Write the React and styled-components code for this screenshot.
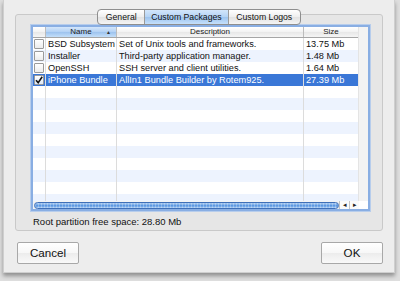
import React from "react";
import styled, { createGlobalStyle } from "styled-components";

const GlobalStyle = createGlobalStyle`
  html, body {
    margin: 0;
    padding: 0;
    background: #d9d9d9;
  }
  body {
    font-family: "Liberation Sans", Arial, sans-serif;
    color: #000;
  }
`;

const packages = [
  { name: "BSD Subsystem", desc: "Set of Unix tools and frameworks.", size: "13.75 Mb" },
  { name: "Installer", desc: "Third-party application manager.", size: "1.48 Mb" },
  { name: "OpenSSH", desc: "SSH server and client utilities.", size: "1.64 Mb" },
  { name: "iPhone Bundle", desc: "AllIn1 Bundle Builder by Rotem925.", size: "27.39 Mb", checked: true, selected: true },
];

const EMPTY_ROWS = 10;

function App() {
  const rows = [...packages];
  for (let i = 0; i < EMPTY_ROWS; i++) rows.push(null);

  return (
    <>
      <GlobalStyle />
      <Page>
        <Sheet>
          <GroupBox>
            <Tabs>
              <Tab>General</Tab>
              <Tab $active>Custom Packages</Tab>
              <Tab $last>Custom Logos</Tab>
            </Tabs>
            <TableFrame>
              <TableBody>
                <Grid>
                  <HeaderRow>
                    <HeadCell />
                    <HeadCell $sorted>
                      Name
                      <SortArrow>▲</SortArrow>
                    </HeadCell>
                    <HeadCell>Description</HeadCell>
                    <HeadCell $last>Size</HeadCell>
                  </HeaderRow>
                  {rows.map((row, i) => (
                    <Row key={i} $odd={i % 2 === 1} $selected={row && row.selected}>
                      <CheckCell>
                        {row && (
                          <Checkbox $checked={row.checked}>
                            {row.checked && (
                              <svg width="8" height="8" viewBox="0 0 8 8">
                                <path d="M1 4.2 L3.2 6.6 L7.2 0.8" fill="none" stroke="#111" strokeWidth="1.6" />
                              </svg>
                            )}
                          </Checkbox>
                        )}
                      </CheckCell>
                      <Cell>{row && row.name}</Cell>
                      <Cell>{row && row.desc}</Cell>
                      <Cell $last>{row && row.size}</Cell>
                    </Row>
                  ))}
                </Grid>
                <VScroll />
              </TableBody>
              <HScrollBar>
                <Thumb />
                <ArrowBtn>◂</ArrowBtn>
                <ArrowBtn>▸</ArrowBtn>
                <Corner />
              </HScrollBar>
            </TableFrame>
            <FreeSpace>Root partition free space: 28.80 Mb</FreeSpace>
          </GroupBox>
          <Buttons>
            <Button>Cancel</Button>
            <Button>OK</Button>
          </Buttons>
        </Sheet>
      </Page>
    </>
  );
}

export default App;

const Page = styled.div`
  width: 400px;
  height: 281px;
  overflow: hidden;
  background: #dedede;
`;

const Sheet = styled.div`
  width: 392px;
  height: 273px;
  margin-left: 3px;
  box-sizing: border-box;
  background: #ededed;
  border: 1px solid #cfcfcf;
  border-top: none;
  box-shadow: 0 3px 4px rgba(0, 0, 0, 0.35);
  padding: 14px 11px 0 11px;
  display: flex;
  flex-direction: column;
`;

const GroupBox = styled.div`
  position: relative;
  height: 217px;
  box-sizing: border-box;
  border: 1px solid #c9c9c9;
  border-radius: 3px;
  background: #e6e6e6;
  padding: 10px 12px 0 15px;
  display: flex;
  flex-direction: column;
`;

const Tabs = styled.div`
  position: absolute;
  top: -6px;
  left: 0;
  right: 0;
  margin: 0 auto;
  width: max-content;
  display: flex;
  height: 14px;
  border: 1px solid #8e8e8e;
  border-radius: 4px;
  overflow: hidden;
  background: linear-gradient(#ffffff, #eeeeee 50%, #e2e2e2 51%, #f4f4f4);
`;

const Tab = styled.div`
  font-size: 8.7px;
  line-height: 14px;
  padding: 0 ${(p) => (p.$active ? "6px" : "7.5px")};
  color: #111;
  border-right: ${(p) => (p.$last ? "none" : "1px solid #9a9a9a")};
  background: ${(p) =>
    p.$active ? "linear-gradient(#d3e6fb, #b4d3f4 50%, #9cc3ee 51%, #c5e0fb)" : "transparent"};
`;

const TableFrame = styled.div`
  height: 186px;
  box-sizing: border-box;
  border: 2px solid #89aee3;
  box-shadow: 0 0 0 1px #b7cdec;
  background: #fff;
  display: flex;
  flex-direction: column;
`;

const TableBody = styled.div`
  flex: 1;
  display: flex;
  overflow: hidden;
`;

const Grid = styled.div`
  flex: 1;
  display: flex;
  flex-direction: column;
`;

const HeaderRow = styled.div`
  display: grid;
  grid-template-columns: 13px 71px 187px 1fr;
  height: 10px;
  border-bottom: 1px solid #a5a5a5;
`;

const HeadCell = styled.div`
  position: relative;
  font-size: 8px;
  line-height: 10px;
  text-align: center;
  color: #222;
  border-right: ${(p) => (p.$last ? "none" : "1px solid #bcbcbc")};
  background: ${(p) =>
    p.$sorted
      ? "linear-gradient(#d4e6fb, #b2d1f4 50%, #9cc2ee 51%, #c4dff9)"
      : "linear-gradient(#ffffff, #f2f2f2 50%, #e7e7e7 51%, #f5f5f5)"};
`;

const SortArrow = styled.span`
  position: absolute;
  right: 5px;
  top: 0;
  font-size: 5px;
  color: #333;
`;

const Row = styled.div`
  display: grid;
  grid-template-columns: 13px 71px 187px 1fr;
  height: 12px;
  flex-shrink: 0;
  background: ${(p) => (p.$selected ? "#3a77d7" : p.$odd ? "#edf3fe" : "#ffffff")};
  color: ${(p) => (p.$selected ? "#fff" : "#111")};
`;

const Cell = styled.div`
  font-size: 9.2px;
  line-height: 12px;
  padding-left: 2px;
  white-space: nowrap;
  overflow: hidden;
  border-right: ${(p) => (p.$last ? "none" : "1px solid #dcdcdc")};
`;

const CheckCell = styled(Cell)`
  padding-left: 1px;
  display: flex;
  align-items: center;
`;

const Checkbox = styled.div`
  width: 8px;
  height: 8px;
  border: 1px solid #9a9a9a;
  border-radius: 1px;
  background: ${(p) => (p.$checked ? "linear-gradient(#ffffff, #dfe9f7)" : "linear-gradient(#ffffff, #ececec)")};
  display: flex;
  align-items: center;
  justify-content: center;
`;

const VScroll = styled.div`
  width: 9px;
  background: #f3f3f3;
  border-left: 1px solid #e4e4e4;
`;

const HScrollBar = styled.div`
  height: 8px;
  display: flex;
  align-items: center;
  background: #f3f3f3;
`;

const Thumb = styled.div`
  flex: 1;
  height: 7px;
  margin-left: 1px;
  border: 1px solid #3f6fb8;
  border-radius: 5px;
  box-sizing: border-box;
  background: repeating-linear-gradient(90deg, rgba(255, 255, 255, 0.25) 0 1px, transparent 1px 3px),
    linear-gradient(#a9c9f0, #6ea4e6 45%, #4d8ddf 55%, #b9d6f6);
`;

const ArrowBtn = styled.div`
  width: 9px;
  height: 8px;
  font-size: 7px;
  line-height: 8px;
  text-align: center;
  color: #222;
  background: #fafafa;
  border-left: 1px solid #c4c4c4;
`;

const Corner = styled.div`
  width: 9px;
  height: 8px;
  background: #fff;
`;

const FreeSpace = styled.div`
  font-size: 9.5px;
  margin-top: 5px;
  padding-left: 2px;
  color: #111;
`;

const Buttons = styled.div`
  display: flex;
  justify-content: space-between;
  padding: 11px 0 0 2px;
`;

const Button = styled.div`
  width: 62px;
  height: 22px;
  box-sizing: border-box;
  border: 1px solid #a8a8a8;
  border-radius: 2px;
  background: linear-gradient(#ffffff, #f7f7f7 50%, #ececec 51%, #f9f9f9);
  font-size: 11.6px;
  line-height: 20px;
  text-align: center;
  color: #111;
`;
